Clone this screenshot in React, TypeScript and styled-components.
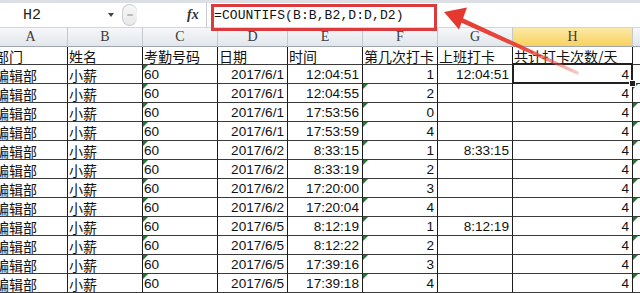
import React from "react";
import styled, { createGlobalStyle, css } from "styled-components";

const GlobalStyle = createGlobalStyle`
  html, body { margin: 0; padding: 0; background: #ffffff; overflow: hidden; }
  #root { width: 640px; height: 293px; }
`;

const COLS = [74, 75, 75, 70, 75, 75, 75, 120, 40];
const LETTERS = ["A", "B", "C", "D", "E", "F", "G", "H", "I"];

const CJK = `"Noto Sans CJK SC", "Noto Sans", sans-serif`;
const NUM = `"Liberation Sans", Arial, sans-serif`;

const Page = styled.div`
  position: relative;
  width: 640px;
  height: 293px;
  overflow: hidden;
  background: #ffffff;
`;

const FormulaBar = styled.div`
  display: flex;
  align-items: center;
  height: 27px;
  box-sizing: border-box;
  border-top: 3px solid #dcdfe4;
  background: #ffffff;
`;

const NameBox = styled.div`
  width: 108px;
  padding-left: 23px;
  box-sizing: border-box;
  font-family: "Liberation Mono", monospace;
  font-size: 15px;
  color: #222;
`;

const Caret = styled.div`
  width: 0;
  height: 0;
  border-left: 3px solid transparent;
  border-right: 3px solid transparent;
  border-top: 4px solid #444;
  margin-right: 8px;
`;

const Pill = styled.div`
  width: 14px;
  height: 20px;
  border-radius: 10px;
  border: 1px solid #c9cdd2;
  border-right: none;
  background: linear-gradient(#f7f7f7, #e6e8ea);
  display: flex;
  align-items: center;
  justify-content: center;
  &::after {
    content: "";
    width: 6px;
    height: 2px;
    background: #bbb;
    border-radius: 1px;
  }
`;

const FxLabel = styled.div`
  margin-left: 50px;
  width: 19px;
  font-family: "Liberation Serif", serif;
  font-style: italic;
  font-size: 14px;
  color: #333;
  font-weight: bold;
`;

const Separator = styled.div`
  width: 1px;
  height: 24px;
  background: #c8ccd2;
`;

const FormulaText = styled.div`
  padding-left: 7px;
  font-family: "Liberation Mono", monospace;
  font-size: 13px;
  letter-spacing: 0.1px;
  color: #111;
`;

const Sheet = styled.div`
  margin-left: -6px;
  display: grid;
  grid-template-columns: ${COLS.map((c) => `${c}px`).join(" ")};
`;

const ColHead = styled.div<{ $active?: boolean }>`
  height: 20px;
  box-sizing: border-box;
  display: flex;
  align-items: center;
  justify-content: center;
  font-family: "Liberation Serif", serif;
  font-size: 14px;
  color: #3a3a3a;
  border-right: 1px solid #c4c9d0;
  border-bottom: 1px solid #9ea6b0;
  border-top: 1px solid #d3d7dc;
  background: ${(p) =>
    p.$active
      ? "linear-gradient(#fce9a6, #f8d25e)"
      : "linear-gradient(#f6f7f9, #e2e6eb)"};
`;

const Cell = styled.div<{
  $align?: "left" | "right";
  $head?: boolean;
  $flag?: boolean;
  $selected?: boolean;
  $cjk?: boolean;
}>`
  position: relative;
  height: ${(p) => (p.$head ? 18 : 19)}px;
  box-sizing: border-box;
  border-right: 1px solid #1c1c1c;
  border-bottom: 1px solid #3a3a3a;
  display: flex;
  align-items: center;
  justify-content: ${(p) => (p.$align === "right" ? "flex-end" : "flex-start")};
  padding: ${(p) => (p.$align === "right" ? "1px 3px 0 0" : "1px 0 0 1px")};
  font-family: ${(p) => (p.$cjk ? CJK : NUM)};
  font-size: ${(p) => (p.$cjk ? "14px" : "13.6px")};
  color: #111;
  white-space: nowrap;
  overflow: visible;
  ${(p) =>
    p.$flag &&
    css`
      &::before {
        content: "";
        position: absolute;
        top: 0;
        left: 0;
        width: 0;
        height: 0;
        border-top: 5px solid #1f7a2f;
        border-right: 5px solid transparent;
      }
    `}
  ${(p) =>
    p.$selected &&
    css`
      &::after {
        content: "";
        position: absolute;
        top: -2px;
        left: -1px;
        right: -1px;
        bottom: -1px;
        border: 2px solid #202020;
        box-shadow: inset 0 0 0 1px #ffffff;
        pointer-events: none;
      }
    `}
`;

const FillHandle = styled.div`
  position: absolute;
  right: -4px;
  bottom: -4px;
  width: 5px;
  height: 5px;
  background: #202020;
  border: 1px solid #ffffff;
  z-index: 2;
`;

const Highlight = styled.div`
  position: absolute;
  left: 211px;
  top: 4px;
  width: 226px;
  height: 27px;
  box-sizing: border-box;
  border: 3px solid #dc3b3e;
  pointer-events: none;
`;

const ArrowSvg = styled.svg`
  position: absolute;
  left: 0;
  top: 0;
  pointer-events: none;
`;

const headers = ["部门", "姓名", "考勤号码", "日期", "时间", "第几次打卡", "上班打卡", "共计打卡次数/天", ""];

const times = [
  "12:04:51", "12:04:55", "17:53:56", "17:53:59",
  "8:33:15", "8:33:19", "17:20:00", "17:20:04",
  "8:12:19", "8:12:22", "17:39:16", "17:39:18",
];
const seq = [1, 2, 0, 4, 1, 2, 3, 4, 1, 2, 3, 4];
const dates = ["2017/6/1", "2017/6/2", "2017/6/5"];
const firstPunch: Record<number, string> = { 0: "12:04:51", 4: "8:33:15", 8: "8:12:19" };

export default function App() {
  return (
    <Page>
      <GlobalStyle />
      <FormulaBar>
        <NameBox>H2</NameBox>
        <Caret />
        <Pill />
        <FxLabel>fx</FxLabel>
        <Separator />
        <FormulaText>=COUNTIFS(B:B,B2,D:D,D2)</FormulaText>
      </FormulaBar>
      <Sheet>
        {LETTERS.map((l) => (
          <ColHead key={l} $active={l === "H"}>
            {l}
          </ColHead>
        ))}
        {headers.map((h, i) => (
          <Cell key={`h${i}`} $head $cjk>
            {h}
          </Cell>
        ))}
        {times.map((t, r) => (
          <React.Fragment key={r}>
            <Cell $cjk>编辑部</Cell>
            <Cell $cjk>小薪</Cell>
            <Cell $flag>60</Cell>
            <Cell $align="right">{dates[Math.floor(r / 4)]}</Cell>
            <Cell $align="right">{t}</Cell>
            <Cell $align="right" $flag={r > 0}>{seq[r]}</Cell>
            <Cell $align="right">{firstPunch[r] ?? ""}</Cell>
            <Cell $align="right" $selected={r === 0}>
              4{r === 0 && <FillHandle />}
            </Cell>
            <Cell $flag={r > 0} />
          </React.Fragment>
        ))}
      </Sheet>
      <Highlight />
      <ArrowSvg width="640" height="293" viewBox="0 0 640 293">
        <defs>
          <linearGradient id="shaft" x1="444" y1="12" x2="578" y2="74" gradientUnits="userSpaceOnUse">
            <stop offset="0" stopColor="#e5392f" stopOpacity="1" />
            <stop offset="0.6" stopColor="#e5392f" stopOpacity="0.9" />
            <stop offset="1" stopColor="#ec6a60" stopOpacity="0.35" />
          </linearGradient>
        </defs>
        <polygon points="457,15.5 461,22.5 578,75 579,72" fill="url(#shaft)" />
        <polygon points="444,12 467,7.5 459,29.5" fill="#e5392f" />
      </ArrowSvg>
    </Page>
  );
}
